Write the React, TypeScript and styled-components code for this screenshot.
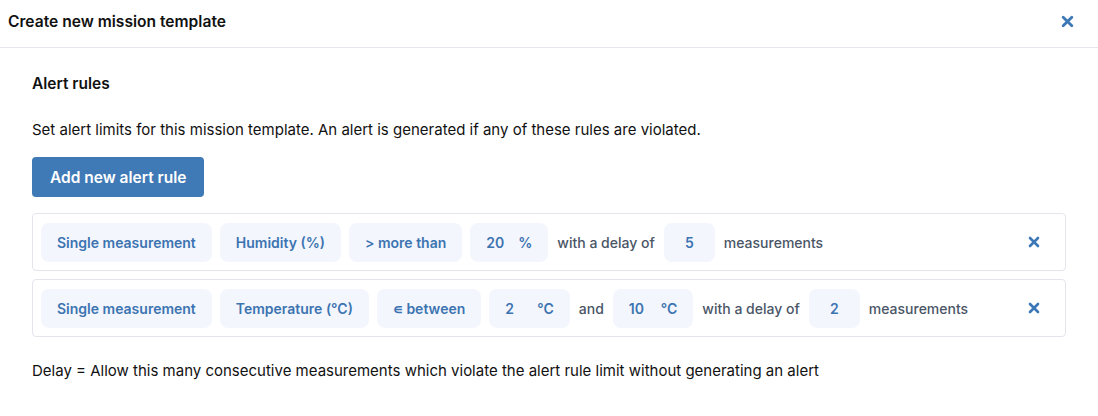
import React from "react";
import styled, { createGlobalStyle } from "styled-components";

const GlobalStyle = createGlobalStyle`
    body {
        margin: 0;
        background: #fff;
        font-family: Inter, "Noto Sans", sans-serif;
        color: #111;
    }
`;

const Modal = styled.div`
    width: 1098px;
    height: 416px;
    display: flex;
    flex-direction: column;
    box-sizing: border-box;
`;

const Header = styled.div`
    display: flex;
    align-items: center;
    justify-content: space-between;
    height: 48px;
    padding: 0 24px 4px 8px;
    border-bottom: 1px solid #e6e7ee;
    box-sizing: border-box;
`;

const Title = styled.div`
    font-size: 15.6px;
    font-weight: 600;
    color: #111;
`;

const CloseButton = styled.button<{ size: number }>`
    border: none;
    background: none;
    padding: 0;
    display: flex;
    cursor: pointer;
    color: #3d78b6;
    width: ${(props) => props.size}px;
    height: ${(props) => props.size}px;
`;

const Body = styled.div`
    display: flex;
    flex-direction: column;
    padding: 26px 32px 0 32px;
`;

const SectionTitle = styled.div`
    font-size: 15.5px;
    font-weight: 600;
    line-height: 20px;
`;

const Text = styled.div<{ top: number }>`
    font-size: 15px;
    line-height: 20px;
    margin-top: ${(props) => props.top}px;
    color: #111;
`;

const AddButton = styled.button`
    align-self: flex-start;
    margin-top: 17px;
    height: 40px;
    padding: 0 18px;
    border: none;
    border-radius: 4px;
    background: #3f7ab7;
    color: #fff;
    font-family: Inter, sans-serif;
    font-size: 15.5px;
    font-weight: 600;
    cursor: pointer;
`;

const RuleList = styled.div`
    display: flex;
    flex-direction: column;
    gap: 8px;
    margin-top: 16px;
`;

const RuleRow = styled.div`
    display: flex;
    align-items: center;
    gap: 8px;
    height: 58px;
    padding: 0 25px 0 8px;
    border: 1px solid #e3e5eb;
    border-radius: 4px;
    box-sizing: border-box;
`;

const Chip = styled.div`
    display: flex;
    align-items: center;
    height: 39px;
    padding: 0 16px;
    border-radius: 8px;
    background: #f3f6fd;
    color: #3c74b1;
    font-size: 14px;
    font-weight: 600;
    white-space: nowrap;
`;

const Value = styled.span<{ hasUnit: boolean }>`
    display: inline-block;
    width: ${(props) => (props.hasUnit ? 32 : 19)}px;
    text-align: ${(props) => (props.hasUnit ? "left" : "center")};
`;

const Label = styled.span`
    color: #4a5566;
    font-size: 14px;
    font-weight: 500;
    white-space: nowrap;
    padding: 0 1px;
`;

const Spacer = styled.div`
    flex: 1;
`;

const Footer = styled(Text)``;

const CrossIcon: React.FC<{ size: number }> = ({ size }) => (
    <svg width={size} height={size} viewBox="0 0 12 12">
        <path d="M2 2 L10 10 M10 2 L2 10" stroke="currentColor" strokeWidth="2.6" strokeLinecap="round" />
    </svg>
);

type Part = { kind: "chip" | "value" | "label"; text: string; unit?: string };

const rules: Part[][] = [
    [
        { kind: "chip", text: "Single measurement" },
        { kind: "chip", text: "Humidity (%)" },
        { kind: "chip", text: "> more than" },
        { kind: "value", text: "20", unit: "%" },
        { kind: "label", text: "with a delay of" },
        { kind: "value", text: "5" },
        { kind: "label", text: "measurements" },
    ],
    [
        { kind: "chip", text: "Single measurement" },
        { kind: "chip", text: "Temperature (°C)" },
        { kind: "chip", text: "∊ between" },
        { kind: "value", text: "2", unit: "°C" },
        { kind: "label", text: "and" },
        { kind: "value", text: "10", unit: "°C" },
        { kind: "label", text: "with a delay of" },
        { kind: "value", text: "2" },
        { kind: "label", text: "measurements" },
    ],
];

const App: React.FC = () => {
    return (
        <Modal>
            <GlobalStyle />
            <Header>
                <Title>Create new mission template</Title>
                <CloseButton size={13}>
                    <CrossIcon size={13} />
                </CloseButton>
            </Header>
            <Body>
                <SectionTitle>Alert rules</SectionTitle>
                <Text top={26}>
                    Set alert limits for this mission template. An alert is generated if any of these rules are violated.
                </Text>
                <AddButton>Add new alert rule</AddButton>
                <RuleList>
                    {rules.map((parts, i) => (
                        <RuleRow key={i}>
                            {parts.map((part, j) => {
                                if (part.kind === "label") return <Label key={j}>{part.text}</Label>;
                                if (part.kind === "value")
                                    return (
                                        <Chip key={j}>
                                            <Value hasUnit={!!part.unit}>{part.text}</Value>
                                            {part.unit && <span>{part.unit}</span>}
                                        </Chip>
                                    );
                                return <Chip key={j}>{part.text}</Chip>;
                            })}
                            <Spacer />
                            <CloseButton size={12}>
                                <CrossIcon size={12} />
                            </CloseButton>
                        </RuleRow>
                    ))}
                </RuleList>
                <Footer top={24}>
                    Delay = Allow this many consecutive measurements which violate the alert rule limit without generating an alert
                </Footer>
            </Body>
        </Modal>
    );
};

export default App;
